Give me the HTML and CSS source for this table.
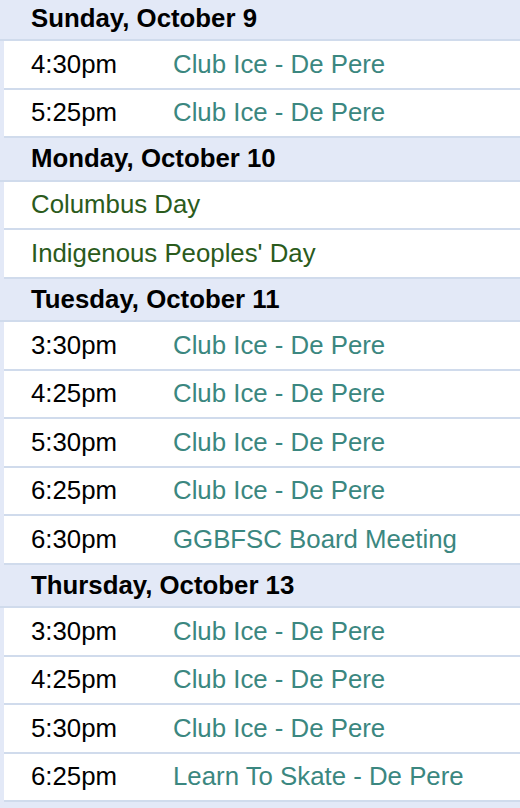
FILE: index.html
```html
<!DOCTYPE html>
<html lang="en">
<head>
<meta charset="utf-8">
<title>Events</title>
<link rel="stylesheet" href="styles.css">
</head>
<body>
<div class="agenda">
  <div class="day">Sunday, October 9</div>
  <div class="row"><span class="time">4:30pm</span><a class="event">Club Ice - De Pere</a></div>
  <div class="row"><span class="time">5:25pm</span><a class="event">Club Ice - De Pere</a></div>

  <div class="day">Monday, October 10</div>
  <div class="row"><a class="holiday">Columbus Day</a></div>
  <div class="row"><a class="holiday">Indigenous Peoples' Day</a></div>

  <div class="day">Tuesday, October 11</div>
  <div class="row"><span class="time">3:30pm</span><a class="event">Club Ice - De Pere</a></div>
  <div class="row"><span class="time">4:25pm</span><a class="event">Club Ice - De Pere</a></div>
  <div class="row"><span class="time">5:30pm</span><a class="event">Club Ice - De Pere</a></div>
  <div class="row"><span class="time">6:25pm</span><a class="event">Club Ice - De Pere</a></div>
  <div class="row"><span class="time">6:30pm</span><a class="event">GGBFSC Board Meeting</a></div>

  <div class="day">Thursday, October 13</div>
  <div class="row"><span class="time">3:30pm</span><a class="event">Club Ice - De Pere</a></div>
  <div class="row"><span class="time">4:25pm</span><a class="event">Club Ice - De Pere</a></div>
  <div class="row"><span class="time">5:30pm</span><a class="event">Club Ice - De Pere</a></div>
  <div class="row"><span class="time">6:25pm</span><a class="event">Learn To Skate - De Pere</a></div>
</div>
</body>
</html>
```
FILE: styles.css
```css
html, body {
  margin: 0;
  padding: 0;
  background: #e3e9f7;
}

body {
  font-family: "Liberation Sans", Arial, Helvetica, sans-serif;
  font-size: 25.8px;
  color: #000;
  overflow: hidden;
}

.agenda {
  display: flex;
  flex-direction: column;
  margin-top: -2.5px;
}

.day {
  height: 41.5px;
  display: flex;
  align-items: center;
  padding-left: 31px;
  font-weight: bold;
  border-bottom: 2px solid #d0dbec;
}

.row {
  height: 46.5px;
  display: grid;
  grid-template-columns: 142px 1fr;
  align-items: center;
  margin-left: 4px;
  padding-left: 27px;
  background: #fff;
  border-bottom: 2px solid #d0dbec;
}

.row .holiday {
  grid-column: 1 / -1;
}

.event {
  color: #3b8780;
  text-decoration: none;
}

.holiday {
  color: #2b5b1c;
  text-decoration: none;
}
```
